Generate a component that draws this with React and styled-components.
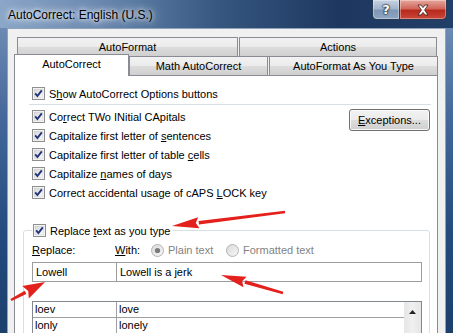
import styled, { createGlobalStyle } from "styled-components";

const GlobalStyle = createGlobalStyle`
  html, body { margin: 0; padding: 0; }
  body {
    font-family: "Liberation Sans", Arial, sans-serif;
    font-size: 11px;
    color: #000;
    background: #fff;
  }
  * { box-sizing: border-box; }
`;

const Window = styled.div`
  position: relative;
  width: 453px;
  height: 333px;
  overflow: hidden;
  display: flex;
  flex-direction: column;
  background: linear-gradient(180deg, #7896bb 0%, #44689a 35%, #234b7e 70%, #1c3f6c 100%);
`;

const TitleBar = styled.div`
  height: 28px;
  flex: none;
  display: flex;
  justify-content: space-between;
  align-items: flex-start;
  background: linear-gradient(90deg, #8aa6c8 0%, #6888b0 22%, #36577f 48%, #1d3760 75%, #223f68 100%);
`;

const Title = styled.div`
  padding: 8px 0 0 8px;
  font-size: 12px;
  line-height: 14px;
  text-shadow: 0 0 4px #fff, 0 0 8px rgba(255, 255, 255, 0.9), 0 0 14px rgba(255, 255, 255, 0.7);
`;

const Controls = styled.div`
  display: flex;
  margin-right: 6px;
`;

const CaptionButton = styled.div`
  width: ${(p) => p.$w}px;
  height: 20px;
  display: flex;
  align-items: center;
  justify-content: center;
  border: 1px solid #2a3b55;
  border-top: none;
  border-left: ${(p) => (p.$close ? "none" : "1px solid #2a3b55")};
  border-radius: ${(p) => (p.$close ? "0 0 5px 0" : "0 0 0 5px")};
  background: ${(p) =>
    p.$close
      ? "linear-gradient(180deg, #e6a79d 0%, #d0675a 45%, #b82a1c 55%, #c9473a 100%)"
      : "linear-gradient(180deg, #c6d3e2 0%, #a3b5cb 45%, #7e97b5 55%, #8ea6c2 100%)"};
  box-shadow: inset 0 0 0 1px rgba(255, 255, 255, 0.35);
`;

const HelpGlyph = styled.span`
  font-family: "DejaVu Sans", sans-serif;
  font-weight: bold;
  font-size: 13px;
  color: #fff;
  text-shadow: 0 0 1px #223, 0 0 2px #223, 0 0 2px #223;
`;

const Client = styled.div`
  flex: 1;
  min-height: 0;
  margin: 0 7px;
  background: #f0f0f0;
  border: 1px solid #8fa2b9;
  border-bottom: none;
  padding: 8px 0 0 6px;
  display: flex;
  flex-direction: column;
`;

const TabRow = styled.div`
  flex: none;
  display: flex;
  align-items: flex-end;
  height: ${(p) => (p.$front ? 19 : 20)}px;
  margin-top: ${(p) => (p.$front ? -1 : 0)}px;
  padding-left: ${(p) => (p.$front ? 0 : 3)}px;
  width: 424px;
`;

const Tab = styled.div`
  position: relative;
  flex: none;
  width: ${(p) => p.$w}px;
  margin-right: ${(p) => p.$gap || 0}px;
  height: ${(p) => (p.$selected ? 22 : p.$front ? 19 : 20)}px;
  margin-bottom: ${(p) => (p.$selected ? -1 : 0)}px;
  z-index: ${(p) => (p.$selected ? 2 : 1)};
  border: 1px solid #898c95;
  border-bottom: ${(p) => (p.$front ? "none" : "1px solid #898c95")};
  background: ${(p) =>
    p.$selected
      ? "#fff"
      : "linear-gradient(180deg, #f2f2f2 0%, #ebebeb 50%, #dddddd 50%, #cfcfcf 100%)"};
  display: flex;
  align-items: center;
  justify-content: center;
  padding-bottom: ${(p) => (p.$selected ? 3 : 0)}px;
  line-height: 14px;
`;

const Panel = styled.div`
  flex: 1;
  min-height: 0;
  width: 424px;
  background: #fff;
  border: 1px solid #898c95;
  border-bottom: none;
  overflow: hidden;
`;

const CheckRow = styled.label`
  height: 19px;
  display: flex;
  align-items: center;
  gap: 4px;
  padding-left: 17px;
  margin-top: ${(p) => p.$top || 0}px;
  white-space: nowrap;
`;

const Separator = styled.div`
  height: 1px;
  margin: 1px 6px 0 14px;
  background: #d5dfe5;
`;

const OptionsArea = styled.div`
  display: flex;
  justify-content: space-between;
  align-items: flex-start;
  margin-top: 2px;
`;

const CheckList = styled.div`
  display: flex;
  flex-direction: column;
`;

const Button = styled.div`
  width: 81px;
  height: 22px;
  margin: 2px 7px 0 0;
  border: 1px solid #707070;
  border-radius: 3px;
  background: linear-gradient(180deg, #f2f2f2 0%, #ebebeb 50%, #dddddd 50%, #cfcfcf 100%);
  box-shadow: inset 0 0 0 1px rgba(255, 255, 255, 0.8);
  display: flex;
  align-items: center;
  justify-content: center;
`;

const GroupBox = styled.fieldset`
  margin: 19px 7px 0 8px;
  padding: 0 7px 20px 8px;
  border: 1px solid #d5dfe5;
  border-radius: 3px;
  min-width: 0;
`;

const Legend = styled.legend`
  padding: 0 3px 0 1px;
  height: 19px;
  display: flex;
  align-items: center;
  gap: 4px;
`;

const LabelRow = styled.div`
  height: 18px;
  margin-top: 1px;
  display: flex;
  align-items: center;
`;

const FieldLabel = styled.span`
  width: ${(p) => p.$w}px;
  flex: none;
`;

const RadioOption = styled.span`
  width: ${(p) => p.$w}px;
  flex: none;
  display: flex;
  align-items: center;
  gap: 4px;
  color: #838383;
`;

const InputRow = styled.div`
  display: flex;
  margin-top: 3px;
`;

const TextBox = styled.div`
  height: 20px;
  width: ${(p) => (p.$w ? `${p.$w}px` : "auto")};
  flex: ${(p) => (p.$w ? "none" : 1)};
  margin-left: ${(p) => (p.$joined ? -1 : 0)}px;
  border: 1px solid #9c9c9c;
  padding: 0 3px;
  display: flex;
  align-items: center;
`;

const ListBox = styled.div`
  margin-top: 19px;
  height: 60px;
  border: 1px solid #828790;
  display: flex;
`;

const ListRows = styled.div`
  flex: 1;
`;

const ListRow = styled.div`
  height: 16px;
  display: flex;
  border-bottom: 1px solid #a0a0a0;
`;

const Cell = styled.div`
  width: ${(p) => (p.$w ? `${p.$w}px` : "auto")};
  flex: ${(p) => (p.$w ? "none" : 1)};
  border-right: ${(p) => (p.$w ? "1px solid #a0a0a0" : "none")};
  padding-left: 2px;
  line-height: 15px;
`;

const ScrollBar = styled.div`
  width: 17px;
  flex: none;
  background: linear-gradient(90deg, #e6e6e6, #f0f0f0 50%, #e6e6e6);
  display: flex;
  justify-content: center;
  padding-top: 8px;
`;

const Overlay = styled.svg`
  position: absolute;
  left: 0;
  top: 0;
  pointer-events: none;
  z-index: 10;
`;

const CheckBox = () => (
  <svg width="13" height="13" viewBox="0 0 13 13">
    <defs>
      <linearGradient id="cbfill" x1="0" y1="0" x2="1" y2="1">
        <stop offset="0" stopColor="#d6d6d6" />
        <stop offset="1" stopColor="#fbfbfb" />
      </linearGradient>
    </defs>
    <rect x="0.5" y="0.5" width="12" height="12" fill="#fff" stroke="#8e8f8f" />
    <rect x="2" y="2" width="9" height="9" fill="url(#cbfill)" stroke="#c2c2c2" strokeWidth="0.5" />
    <path d="M3.2 6.4 L5.4 9 L9.8 3.4" fill="none" stroke="#21327e" strokeWidth="1.9" />
  </svg>
);

const Radio = ({ on }) => (
  <svg width="13" height="13" viewBox="0 0 13 13">
    <defs>
      <linearGradient id="rdfill" x1="0" y1="0" x2="1" y2="1">
        <stop offset="0" stopColor="#d9d9d9" />
        <stop offset="1" stopColor="#f7f7f7" />
      </linearGradient>
    </defs>
    <circle cx="6.5" cy="6.5" r="6" fill="url(#rdfill)" stroke="#b4b4b4" />
    {on && <circle cx="6.5" cy="6.5" r="2.6" fill="#7a7a7a" />}
  </svg>
);

const CloseIcon = () => (
  <svg width="14" height="12" viewBox="0 0 14 12">
    <path
      d="M2 1 H5 L7 3.6 L9 1 H12 L8.6 6 L12 11 H9 L7 8.4 L5 11 H2 L5.4 6 Z"
      fill="#fff"
      stroke="#3b1a16"
      strokeWidth="0.8"
    />
  </svg>
);

const UpArrow = () => (
  <svg width="7" height="4" viewBox="0 0 7 4">
    <path d="M0 4 L3.5 0 L7 4 Z" fill="#222" />
  </svg>
);

const Arrow = ({ from, to, head = 24, half = 6 }) => {
  const [x1, y1] = from;
  const [x2, y2] = to;
  const len = Math.hypot(x2 - x1, y2 - y1);
  const ux = (x2 - x1) / len;
  const uy = (y2 - y1) / len;
  const px = -uy;
  const py = ux;
  const bx = x2 - ux * head;
  const by = y2 - uy * head;
  const shaft = [
    [x1 + px * 1.2, y1 + py * 1.2],
    [bx + px * 1.8, by + py * 1.8],
    [bx - px * 1.8, by - py * 1.8],
    [x1 - px * 1.2, y1 - py * 1.2],
  ];
  const tip = [
    [x2, y2],
    [bx + px * half, by + py * half],
    [bx + ux * 3, by + uy * 3],
    [bx - px * half, by - py * half],
  ];
  const pts = (a) => a.map((p) => p.join(",")).join(" ");
  return (
    <g fill="#e4201c">
      <polygon points={pts(shaft)} />
      <polygon points={pts(tip)} />
    </g>
  );
};

const checks = [
  <>Co<u>r</u>rect TWo INitial CApitals</>,
  <>Capitalize first letter of <u>s</u>entences</>,
  <>Capitalize first letter of table <u>c</u>ells</>,
  <>Capitalize <u>n</u>ames of days</>,
  <>Correct accidental usage of cAPS <u>L</u>OCK key</>,
];

const entries = [
  ["loev", "love"],
  ["lonly", "lonely"],
];

export default function App() {
  return (
    <>
      <GlobalStyle />
      <Window>
        <TitleBar>
          <Title>AutoCorrect: English (U.S.)</Title>
          <Controls>
            <CaptionButton $w={28}>
              <HelpGlyph>?</HelpGlyph>
            </CaptionButton>
            <CaptionButton $w={47} $close>
              <CloseIcon />
            </CaptionButton>
          </Controls>
        </TitleBar>
        <Client>
          <TabRow>
            <Tab $w={221} $gap={1}>AutoFormat</Tab>
            <Tab $w={198}>Actions</Tab>
          </TabRow>
          <TabRow $front>
            <Tab $w={115} $front $selected>AutoCorrect</Tab>
            <Tab $w={139} $front $gap={1}>Math AutoCorrect</Tab>
            <Tab $w={169} $front>AutoFormat As You Type</Tab>
          </TabRow>
          <Panel>
            <CheckRow $top={8}>
              <CheckBox />
              <span>S<u>h</u>ow AutoCorrect Options buttons</span>
            </CheckRow>
            <Separator />
            <OptionsArea>
              <CheckList>
                {checks.map((c, i) => (
                  <CheckRow key={i}>
                    <CheckBox />
                    <span>{c}</span>
                  </CheckRow>
                ))}
              </CheckList>
              <Button>
                <span><u>E</u>xceptions...</span>
              </Button>
            </OptionsArea>
            <GroupBox>
              <Legend>
                <CheckBox />
                <span>Replace <u>t</u>ext as you type</span>
              </Legend>
              <LabelRow>
                <FieldLabel $w={83}><u>R</u>eplace:</FieldLabel>
                <FieldLabel $w={36}><u>W</u>ith:</FieldLabel>
                <RadioOption $w={75}>
                  <Radio on />
                  <span>Plain text</span>
                </RadioOption>
                <RadioOption $w={100}>
                  <Radio />
                  <span>Formatted text</span>
                </RadioOption>
              </LabelRow>
              <InputRow>
                <TextBox $w={85}>Lowell</TextBox>
                <TextBox $joined>Lowell is a jerk</TextBox>
              </InputRow>
              <ListBox>
                <ListRows>
                  {entries.map(([a, b]) => (
                    <ListRow key={a}>
                      <Cell $w={84}>{a}</Cell>
                      <Cell>{b}</Cell>
                    </ListRow>
                  ))}
                </ListRows>
                <ScrollBar>
                  <UpArrow />
                </ScrollBar>
              </ListBox>
            </GroupBox>
          </Panel>
        </Client>
        <Overlay width="453" height="333" viewBox="0 0 453 333">
          <Arrow from={[285, 212]} to={[172, 226]} head={27} half={5.5} />
          <Arrow from={[283, 293]} to={[221, 275]} head={25} half={5.5} />
          <Arrow from={[11, 300]} to={[45, 282]} head={22} half={7} />
        </Overlay>
      </Window>
    </>
  );
}
